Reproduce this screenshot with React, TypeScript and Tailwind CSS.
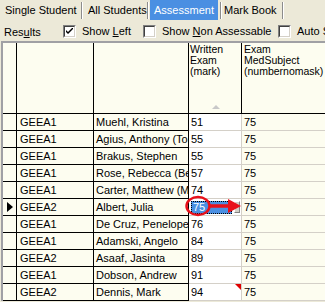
import React from 'react'

const students = [
	{ group: 'GEEA1', name: 'Muehl, Kristina', mark: '51' },
	{ group: 'GEEA1', name: 'Agius, Anthony (Tony)', mark: '55' },
	{ group: 'GEEA1', name: 'Brakus, Stephen', mark: '55' },
	{ group: 'GEEA1', name: 'Rose, Rebecca (Becky)', mark: '57' },
	{ group: 'GEEA1', name: 'Carter, Matthew (Matt)', mark: '74' },
	{ group: 'GEEA2', name: 'Albert, Julia', mark: '75', current: true },
	{ group: 'GEEA1', name: 'De Cruz, Penelope', mark: '76' },
	{ group: 'GEEA1', name: 'Adamski, Angelo', mark: '84' },
	{ group: 'GEEA2', name: 'Asaaf, Jasinta', mark: '89' },
	{ group: 'GEEA1', name: 'Dobson, Andrew', mark: '91' },
	{ group: 'GEEA2', name: 'Dennis, Mark', mark: '94', comment: true },
]

function TabSep() {
	return <div className="my-[2px] w-[2px] shrink-0 border-l border-r border-l-[#8c8c8c] border-r-white" />
}

function Checkbox({ checked }: { checked?: boolean }) {
	return (
		<div className="h-[13px] w-[13px] shrink-0 border border-t-[#808080] border-l-[#808080] border-b-white border-r-white">
			<div className="flex h-full w-full items-center justify-center border border-t-[#404040] border-l-[#404040] border-b-[#d4d0c8] border-r-[#d4d0c8] bg-white">
				{checked && (
					<svg width="7" height="7" viewBox="0 0 7 7">
						<path d="M0 2 L0 4 L2 6 L7 1 L7 -1 L2 4 Z" fill="#000" />
					</svg>
				)}
			</div>
		</div>
	)
}

export default function App() {
	return (
		<div className="relative h-[302px] w-[325px] overflow-hidden bg-[#ece9d8] font-['Liberation_Sans',Arial,sans-serif] text-[11px] leading-none text-black">
			{/* tabs */}
			<div className="flex h-[21px] whitespace-nowrap">
				<div className="flex w-[81px] shrink-0 items-center pl-[5px]">Single Student</div>
				<TabSep />
				<div className="flex w-[64px] shrink-0 items-center pl-[5px]">All Students</div>
				<TabSep />
				<div className="ml-[1px] mb-[1px] flex w-[68px] shrink-0 items-center justify-center bg-[#4a8fe2] text-white">
					Assessment
				</div>
				<div className="w-[2px] shrink-0" />
				<TabSep />
				<div className="flex w-[60px] shrink-0 items-center pl-[2px]">Mark Book</div>
				<TabSep />
			</div>

			{/* options bar */}
			<div className="flex h-[20px] items-center whitespace-nowrap">
				<div className="w-[63px] shrink-0 pl-[4px] pt-[3px]">
					Res<span className="underline">u</span>lts
				</div>
				<div className="flex w-[80px] shrink-0 items-center gap-[6px]">
					<Checkbox checked />
					<span>
						Show <span className="underline">L</span>eft
					</span>
				</div>
				<div className="flex w-[135px] shrink-0 items-center gap-[6px]">
					<Checkbox />
					<span>
						Show <span className="underline">N</span>on Assessable
					</span>
				</div>
				<div className="flex shrink-0 items-center gap-[6px]">
					<Checkbox />
					<span>Auto Save</span>
				</div>
			</div>

			{/* grid */}
			<div className="ml-[1px] w-[400px] border-l-2 border-t-2 border-[#a0a0a4] bg-[#fdfdf0]">
				<div className="flex h-[71px] border-b border-black text-[10.5px] leading-[11px]">
					<div className="w-[14px] shrink-0 border-r border-black" />
					<div className="w-[77px] shrink-0 border-r border-black" />
					<div className="w-[95px] shrink-0 border-r border-black" />
					<div className="flex w-[53px] shrink-0 flex-col border-r border-black pl-[1px] pt-[1px]">
						<span>Written</span>
						<span>Exam</span>
						<span>(mark)</span>
						<svg className="mx-auto mt-auto mb-[4px]" width="8" height="4" viewBox="0 0 8 4">
							<path d="M0 4 L4 0 L8 4 Z" fill="#c8c8c8" />
						</svg>
					</div>
					<div className="flex flex-1 flex-col pl-[2px] pt-[1px]">
						<span>Exam</span>
						<span>MedSubject</span>
						<span>(numbernomask)</span>
					</div>
				</div>

				{students.map((s) => (
					<div key={s.name} className="flex h-[17px]">
						<div className="flex w-[14px] shrink-0 items-center justify-center border-b border-r border-black">
							{s.current && (
								<svg width="6" height="10" viewBox="0 0 6 10">
									<path d="M0 0 L6 5 L0 10 Z" fill="#000" />
								</svg>
							)}
						</div>
						<div className="flex w-[77px] shrink-0 items-center border-b border-r border-black pl-[3px]">{s.group}</div>
						<div className="flex w-[95px] shrink-0 items-center overflow-hidden whitespace-nowrap border-b border-r border-black pl-[2px]">
							{s.name}
						</div>
						<div className="relative flex w-[53px] shrink-0 items-center border-b border-r border-[#d4d0c8] bg-white pl-[2px]">
							{s.current ? (
								<>
									<div className="flex h-[13px] w-[41px] items-center border border-dotted border-black bg-[#4a8fe2] pl-[1px] text-white">
										{s.mark}
									</div>
									<div className="ml-auto mr-[1px] h-[12px] w-[6px] border border-t-white border-l-white border-b-[#808080] border-r-[#808080] bg-[#d4d0c8]" />
								</>
							) : (
								s.mark
							)}
							{s.comment && (
								<svg className="absolute right-0 top-0" width="6" height="6" viewBox="0 0 6 6">
									<path d="M0 0 L6 0 L6 6 Z" fill="#e00000" />
								</svg>
							)}
						</div>
						<div className="flex flex-1 items-center border-b border-[#d4d0c8] pl-[2px]">75</div>
					</div>
				))}
			</div>

			{/* annotation: ring and arrow */}
			<svg className="pointer-events-none absolute left-0 top-0" width="325" height="302" viewBox="0 0 325 302">
				<ellipse cx="198" cy="206" rx="11.5" ry="9" fill="none" stroke="#e8101a" strokeWidth="2.5" />
				<line x1="209" y1="206" x2="230" y2="206" stroke="#e8101a" strokeWidth="3.5" />
				<path d="M228 199 L241 206 L228 213 Z" fill="#e8101a" />
			</svg>
		</div>
	)
}
